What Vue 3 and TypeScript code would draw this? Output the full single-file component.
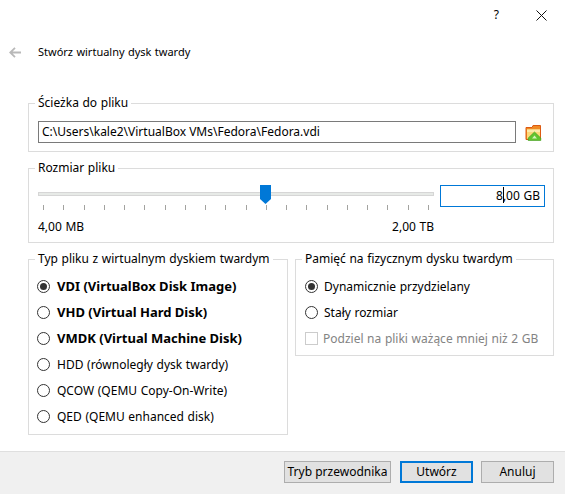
<template>
  <div class="dialog">
    <div class="titlebar">
      <span class="help">?</span>
      <svg class="close" width="11" height="11" viewBox="0 0 11 11">
        <path d="M0.5 0.5L10.5 10.5M10.5 0.5L0.5 10.5" stroke="#111" fill="none" />
      </svg>
    </div>

    <div class="heading">
      <svg class="back" width="12" height="11" viewBox="0 0 12 11">
        <path d="M6 0.8L1.2 5.5L6 10.2M1.5 5.5H12" stroke="#b9b9b9" stroke-width="1.8" fill="none" />
      </svg>
      <span class="heading-text">Stwórz wirtualny dysk twardy</span>
    </div>

    <div class="content">
      <fieldset class="group path-group">
        <legend>Ścieżka do pliku</legend>
        <div class="path-row">
          <div class="path-input">C:\Users\kale2\VirtualBox VMs\Fedora\Fedora.vdi</div>
          <svg class="folder" width="17" height="17" viewBox="0 0 17 17">
            <path d="M1 3.5H7L8 1.5H15.5V15.5H1Z" fill="#f08a24" stroke="#dd5a12" />
            <path d="M2 5.5H15V15H2Z" fill="#fcd978" />
            <path d="M2 5.5H15V8H2Z" fill="#fdeaa8" />
            <path d="M9.5 8L15.8 14V16.5H3.2V14Z" fill="#63c42e" stroke="#3f9a1a" stroke-width="0.6" />
            <path d="M9.5 11.5L7 14.5H12Z" fill="#d6f5b8" />
          </svg>
        </div>
      </fieldset>

      <fieldset class="group size-group">
        <legend>Rozmiar pliku</legend>
        <div class="size-row">
          <div class="slider">
            <div class="track"></div>
            <svg class="thumb" width="11" height="19" viewBox="0 0 11 19">
              <path d="M0 0H11V14L5.5 19L0 14Z" fill="#0078d7" />
            </svg>
            <div class="ticks">
              <i v-for="n in tickCount" :key="n"></i>
            </div>
            <div class="range">
              <span>4,00 MB</span>
              <span>2,00 TB</span>
            </div>
          </div>
          <div class="size-input"><span class="caret-wrap">8<b class="caret"></b></span>,00 GB</div>
        </div>
      </fieldset>

      <div class="columns">
        <fieldset class="group type-group">
          <legend>Typ pliku z wirtualnym dyskiem twardym</legend>
          <label v-for="t in fileTypes" :key="t.name" class="option" :class="{ strong: t.bold }">
            <span class="radio" :class="{ on: t.checked }"></span>{{ t.name }}
          </label>
        </fieldset>

        <fieldset class="group storage-group">
          <legend>Pamięć na fizycznym dysku twardym</legend>
          <label class="option"><span class="radio on"></span>Dynamicznie przydzielany</label>
          <label class="option"><span class="radio"></span>Stały rozmiar</label>
          <label class="option disabled"><span class="check"></span>Podziel na pliki ważące mniej niż 2 GB</label>
        </fieldset>
      </div>
    </div>

    <div class="footer">
      <button class="btn guide">Tryb przewodnika</button>
      <button class="btn primary">Utwórz</button>
      <button class="btn">Anuluj</button>
    </div>
  </div>
</template>

<script setup lang="ts">
const tickCount = 20

const fileTypes = [
  { name: 'VDI (VirtualBox Disk Image)', bold: true, checked: true },
  { name: 'VHD (Virtual Hard Disk)', bold: true, checked: false },
  { name: 'VMDK (Virtual Machine Disk)', bold: true, checked: false },
  { name: 'HDD (równoległy dysk twardy)', bold: false, checked: false },
  { name: 'QCOW (QEMU Copy-On-Write)', bold: false, checked: false },
  { name: 'QED (QEMU enhanced disk)', bold: false, checked: false },
]
</script>

<style>
html,
body {
  margin: 0;
  background: #fff;
}
</style>

<style scoped>
.dialog {
  width: 565px;
  height: 494px;
  display: flex;
  flex-direction: column;
  overflow: hidden;
  background: #fff;
  color: #000;
  font-family: "Noto Sans", sans-serif;
  font-size: 12px;
  line-height: 16px;
  word-spacing: 0.5px;
}

/* TITLE BAR */
.titlebar {
  height: 30px;
  flex: none;
  display: flex;
  align-items: center;
  justify-content: flex-end;
  padding-right: 18px;
}
.help {
  margin-right: 37px;
  font-size: 12px;
}

/* HEADING */
.heading {
  height: 44px;
  flex: none;
  display: flex;
  align-items: center;
  padding-left: 9px;
  box-sizing: border-box;
}
.heading-text {
  font-size: 11px;
}
.back {
  margin-right: 17px;
}

/* GROUPS */
.content {
  flex: 1;
  padding: 21px 11px 0 28px;
}
.group {
  margin: 0;
  padding: 0 9px;
  border: 1px solid #dcdcdc;
  box-sizing: border-box;
  min-width: 0;
}
.group legend {
  padding: 0 3px;
  margin-left: -3px;
}
.path-group {
  height: 57px;
}
.path-row {
  display: flex;
  align-items: center;
  margin-top: 10px;
}
.path-input {
  width: 478px;
  height: 22px;
  box-sizing: border-box;
  border: 1px solid #7a7a7a;
  padding: 2px 3px;
  line-height: 16px;
  word-spacing: 0;
}
.folder {
  margin-left: 9px;
}

.size-group {
  height: 83px;
  margin-top: 8px;
}
.size-row {
  display: flex;
  margin-top: 9px;
  margin-right: -1px;
}
.slider {
  position: relative;
  flex: none;
  width: 396px;
  margin-right: 6px;
}
.track {
  height: 4px;
  margin-top: 7px;
  box-sizing: border-box;
  background: #e7eae7;
  border: 1px solid #d6d6d6;
}
.thumb {
  position: absolute;
  left: 222px;
  top: 0;
}
.ticks {
  display: flex;
  justify-content: space-between;
  margin: 9px 5px 0 5px;
}
.ticks i {
  width: 1px;
  height: 5px;
  background: #a3a3a0;
}
.range {
  display: flex;
  justify-content: space-between;
  margin-top: 9px;
}
.size-input {
  flex: none;
  width: 105px;
  height: 22px;
  box-sizing: border-box;
  border: 1px solid #0078d7;
  padding: 2px 4px 2px 2px;
  text-align: right;
}
.caret-wrap {
  position: relative;
}
.caret {
  position: absolute;
  right: -1px;
  top: 0;
  width: 1px;
  height: 16px;
  background: #000;
}

/* OPTIONS */
.columns {
  display: flex;
  align-items: flex-start;
  gap: 7px;
  margin-top: 8px;
}
.type-group {
  width: 260px;
  height: 184px;
}
.storage-group {
  width: 259px;
  height: 105px;
}
.option {
  display: flex;
  align-items: center;
  height: 26px;
  box-sizing: border-box;
  white-space: nowrap;
}
.type-group .option:first-of-type,
.storage-group .option:first-of-type {
  margin-top: 7px;
}
.strong {
  padding-bottom: 2px;
  font-size: 13px;
  font-weight: 700;
  word-spacing: 0;
}
.radio {
  width: 13px;
  height: 13px;
  box-sizing: border-box;
  border: 1px solid #333;
  border-radius: 50%;
  margin-top: -2px;
  margin-right: 6px;
  flex: none;
  display: flex;
  align-items: center;
  justify-content: center;
}
.strong .radio {
  margin-top: 0;
}
.type-group .radio {
  margin-left: -1px;
  margin-right: 7px;
}
.radio.on::after {
  content: "";
  width: 7px;
  height: 7px;
  border-radius: 50%;
  background: #333;
}
.check {
  width: 13px;
  height: 13px;
  box-sizing: border-box;
  border: 1px solid #cccccc;
  margin-top: -2px;
  margin-right: 5px;
  flex: none;
}
.disabled {
  color: #838383;
}

/* FOOTER */
.footer {
  height: 43px;
  flex: none;
  box-sizing: border-box;
  background: #f0f0f0;
  border-top: 1px solid #dfdfdf;
  display: flex;
  justify-content: flex-end;
  padding: 9px 11px 0 0;
}
.btn {
  width: 73px;
  height: 22px;
  margin-left: 8px;
  padding: 0;
  box-sizing: border-box;
  border: 1px solid #adadad;
  background: #e1e1e1;
  color: #000;
  font: inherit;
}
.guide {
  width: 107px;
  margin-left: 0;
}
.primary {
  border: 2px solid #0078d7;
  margin-left: 9px;
}
</style>
